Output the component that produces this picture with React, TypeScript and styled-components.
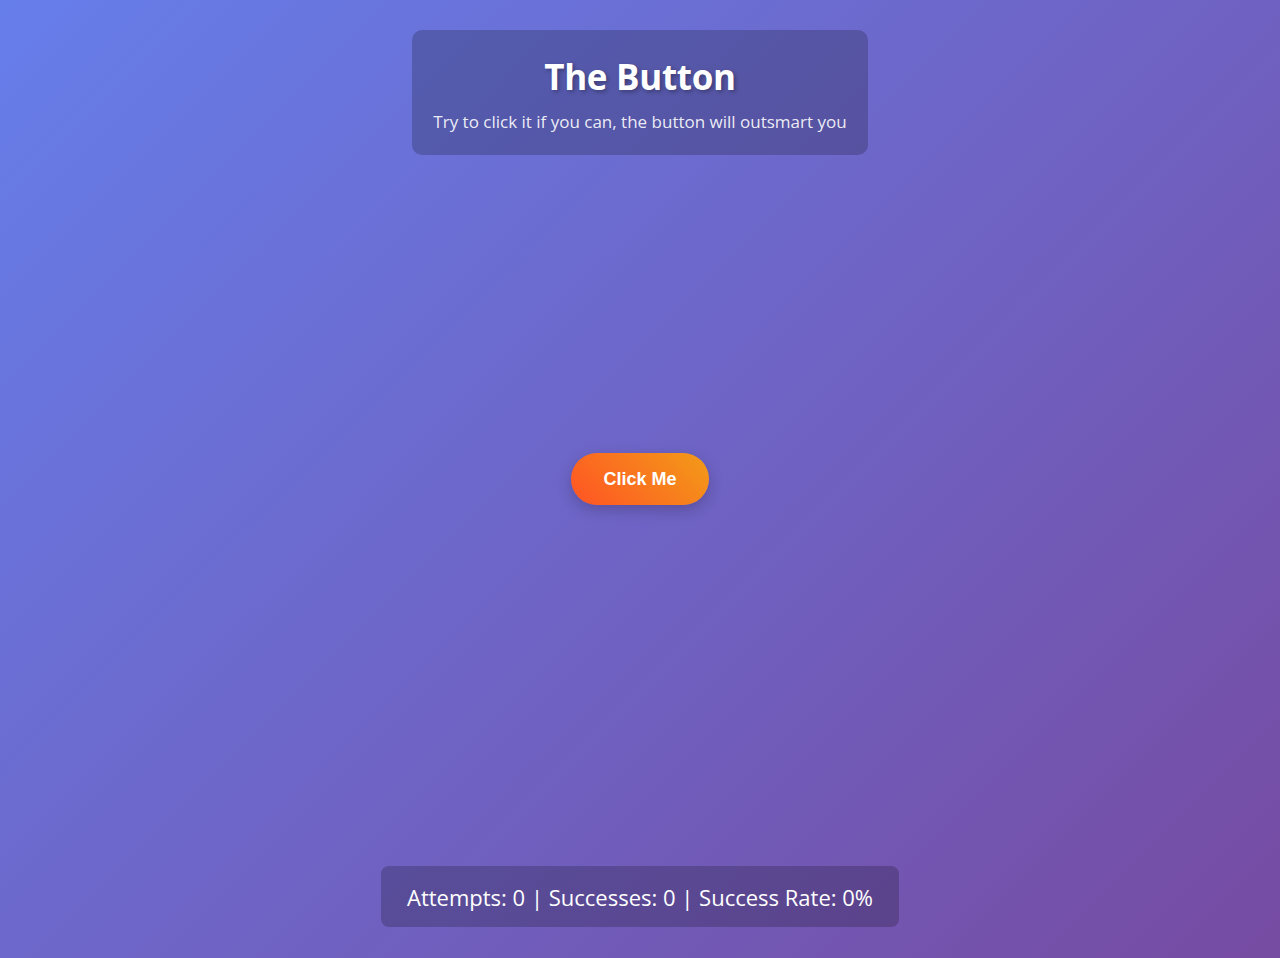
import React from "react";
import styled, { createGlobalStyle } from "styled-components";

const Global = createGlobalStyle`
  html, body { margin: 0; padding: 0; height: 100%; }
  body {
    font-family: "Open Sans", "Noto Sans", sans-serif;
    background: linear-gradient(135deg, #667eea 0%, #764ba2 100%);
    overflow: hidden;
  }
`;

const Page = styled.div`
  height: 958px;
  display: grid;
  grid-template: 1fr / 1fr;
  justify-items: center;
  color: #fff;
`;

const Header = styled.header`
  grid-area: 1 / 1;
  align-self: start;
  margin-top: 30px;
  width: 456px;
  box-sizing: border-box;
  padding: 20px 0 22px;
  background: rgba(0, 0, 0, 0.2);
  border-radius: 10px;
  text-align: center;
`;

const Title = styled.h1`
  margin: 0 0 7px;
  font-size: 35px;
  line-height: 54px;
  font-weight: 700;
  letter-spacing: -0.3px;
  text-shadow: 2px 2px 4px rgba(0, 0, 0, 0.3);
`;

const Subtitle = styled.p`
  margin: 0;
  font-size: 17px;
  line-height: 22px;
  color: rgba(255, 255, 255, 0.9);
`;

const EvasiveButton = styled.button`
  grid-area: 1 / 1;
  align-self: center;
  width: 138px;
  height: 52px;
  border: none;
  border-radius: 26px;
  background: linear-gradient(45deg, #ff5324, #f39c18);
  color: #fff;
  font-family: "Liberation Sans", Arial, sans-serif;
  font-weight: 700;
  font-size: 18px;
  box-shadow: 0 5px 15px rgba(0, 0, 0, 0.2);
  cursor: pointer;
`;

const Stats = styled.div`
  grid-area: 1 / 1;
  align-self: end;
  margin-bottom: 31px;
  width: 518px;
  height: 61px;
  box-sizing: border-box;
  display: flex;
  align-items: center;
  justify-content: center;
  background: rgba(0, 0, 0, 0.2);
  border-radius: 8px;
  font-size: 22px;
`;

export default function App() {
  return (
    <>
      <Global />
      <Page>
        <Header>
          <Title>The Button</Title>
          <Subtitle>Try to click it if you can, the button will outsmart you</Subtitle>
        </Header>
        <EvasiveButton>Click Me</EvasiveButton>
        <Stats>Attempts: 0 | Successes: 0 | Success Rate: 0%</Stats>
      </Page>
    </>
  );
}
